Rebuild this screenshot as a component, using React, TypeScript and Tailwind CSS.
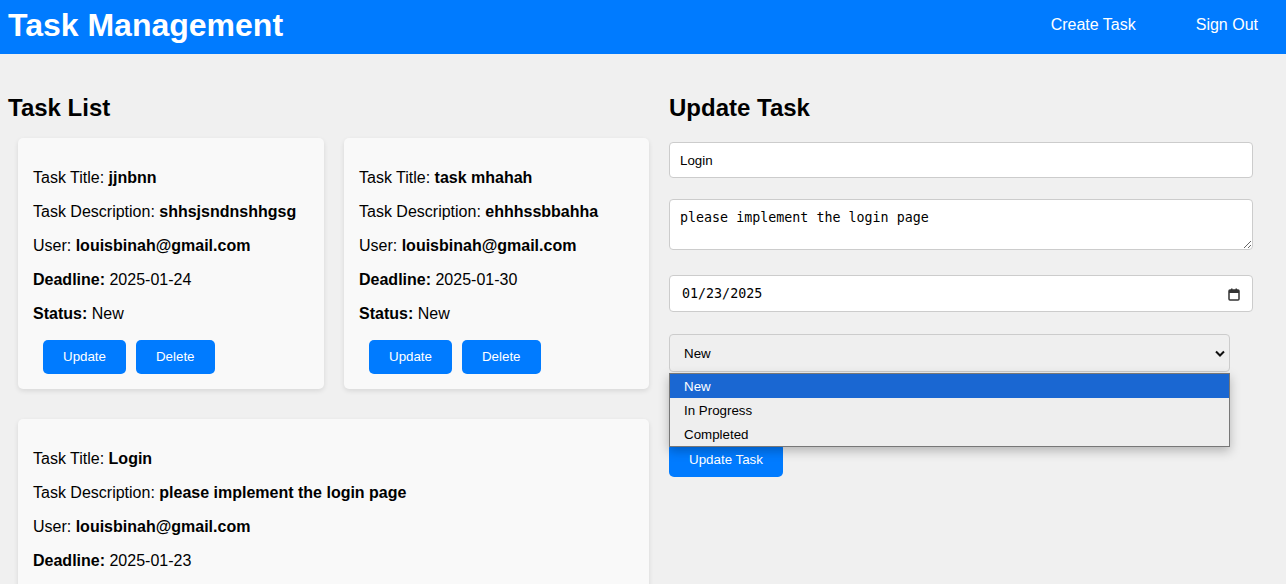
import React from "react";

type Task = {
  title: string;
  description: string;
  user: string;
  deadline: string;
  status: string;
  width: string;
};

const tasks: Task[] = [
  {
    title: "jjnbnn",
    description: "shhsjsndnshhgsg",
    user: "louisbinah@gmail.com",
    deadline: "2025-01-24",
    status: "New",
    width: "w-[306px]",
  },
  {
    title: "task mhahah",
    description: "ehhhssbbahha",
    user: "louisbinah@gmail.com",
    deadline: "2025-01-30",
    status: "New",
    width: "w-[305px]",
  },
  {
    title: "Login",
    description: "please implement the login page",
    user: "louisbinah@gmail.com",
    deadline: "2025-01-23",
    status: "New",
    width: "w-full",
  },
];

const TaskCard = ({ task }: { task: Task }) => {
  return (
    <div
      className={`${task.width} bg-[#f9f9f9] rounded-[5px] shadow-[0_2px_5px_rgba(0,0,0,0.1)] px-[15px] py-[15px] text-[16px] leading-[18px]`}
    >
      <p className="my-4">
        Task Title: <strong>{task.title}</strong>
      </p>
      <p className="my-4">
        Task Description: <strong>{task.description}</strong>
      </p>
      <p className="my-4">
        User: <strong>{task.user}</strong>
      </p>
      <p className="my-4">
        <strong>Deadline:</strong> {task.deadline}
      </p>
      <p className="my-4">
        <strong>Status:</strong> {task.status}
      </p>
      <div className="flex gap-[10px] pl-[10px] pt-[1px]">
        <button className="h-[34px] px-[20px] bg-[#007bff] text-white text-[13.33px] rounded-[5px]">
          Update
        </button>
        <button className="h-[34px] px-[20px] bg-[#007bff] text-white text-[13.33px] rounded-[5px]">
          Delete
        </button>
      </div>
    </div>
  );
};

const CalendarIcon = () => (
  <svg width="12" height="13" viewBox="0 0 12 13" fill="none">
    <rect x="1" y="2" width="10" height="10" rx="1" stroke="#333" strokeWidth="1.5" />
    <rect x="1" y="2" width="10" height="3" fill="#333" />
    <rect x="3" y="0.5" width="1.5" height="2" fill="#333" />
    <rect x="7.5" y="0.5" width="1.5" height="2" fill="#333" />
  </svg>
);

const Chevron = () => (
  <svg width="10" height="7" viewBox="0 0 10 7" fill="none">
    <path d="M1 1.5 L5 5.5 L9 1.5" stroke="#111" strokeWidth="2" />
  </svg>
);

const App = () => {
  return (
    <div className="min-h-screen bg-[#f0f0f0] text-black font-['Liberation_Sans',Arial,sans-serif]">
      <header className="h-[54px] bg-[#007bff] flex items-center justify-between pl-[8px] pr-[28px]">
        <h1 className="text-[32px] font-bold text-white leading-[36px] -mt-[4px]">
          Task Management
        </h1>
        <nav className="flex gap-[60px] text-white text-[16px] -mt-[4px]">
          <a href="#">Create Task</a>
          <a href="#">Sign Out</a>
        </nav>
      </header>

      <main className="flex px-[8px] gap-[10px]">
        <section className="w-[651px] shrink-0">
          <h2 className="mt-[40px] h-[28px] leading-[28px] text-[24px] font-bold">
            Task List
          </h2>
          <div className="mt-[16px] px-[10px] flex flex-wrap gap-x-[20px] gap-y-[30px]">
            {tasks.map((t) => (
              <TaskCard key={t.title} task={t} />
            ))}
          </div>
        </section>

        <section className="w-[609px] flex flex-col items-start">
          <h2 className="mt-[40px] h-[28px] leading-[28px] text-[24px] font-bold">
            Update Task
          </h2>
          <input
            readOnly
            value="Login"
            className="mt-[20px] w-[584px] h-[36px] bg-white border border-[#ccc] rounded-[4px] px-[10px] text-[13.33px] outline-none"
          />
          <textarea
            readOnly
            value="please implement the login page"
            className="mt-[21px] w-[584px] h-[51px] bg-white border border-[#ccc] rounded-[4px] px-[10px] pt-[10px] pb-[6px] text-[13.33px] leading-[16px] font-['DejaVu_Sans_Mono',monospace] outline-none"
          />
          <div className="mt-[25px] w-[584px] h-[37px] bg-white border border-[#ccc] rounded-[4px] pl-[12px] pr-[12px] pt-[1px] flex items-center justify-between text-[13.33px] font-['DejaVu_Sans_Mono',monospace]">
            <span>01/23/2025</span>
            <CalendarIcon />
          </div>
          <div className="relative mt-[22px] w-[561px]">
            <div className="h-[38px] bg-[#efefef] border border-[#ccc] rounded-[4px] pl-[14px] pr-[4px] pt-[1px] flex items-center justify-between text-[13.33px]">
              <span>New</span>
              <Chevron />
            </div>
            <ul className="absolute left-0 right-0 top-full mt-[1px] bg-[#eeeeee] border border-[#777] shadow-[0_4px_10px_rgba(0,0,0,0.25)] text-[13.33px] z-10">
              <li className="h-[24px] flex items-center pl-[14px] pt-[2px] bg-[#1a67d2] text-white">
                New
              </li>
              <li className="h-[24px] flex items-center pl-[14px] pt-[2px]">In Progress</li>
              <li className="h-[24px] flex items-center pl-[14px] pt-[2px]">Completed</li>
            </ul>
          </div>
          <button className="mt-[71px] h-[34px] w-[114px] bg-[#007bff] text-white text-[13.33px] rounded-[5px]">
            Update Task
          </button>
        </section>
      </main>
    </div>
  );
};

export default App;
